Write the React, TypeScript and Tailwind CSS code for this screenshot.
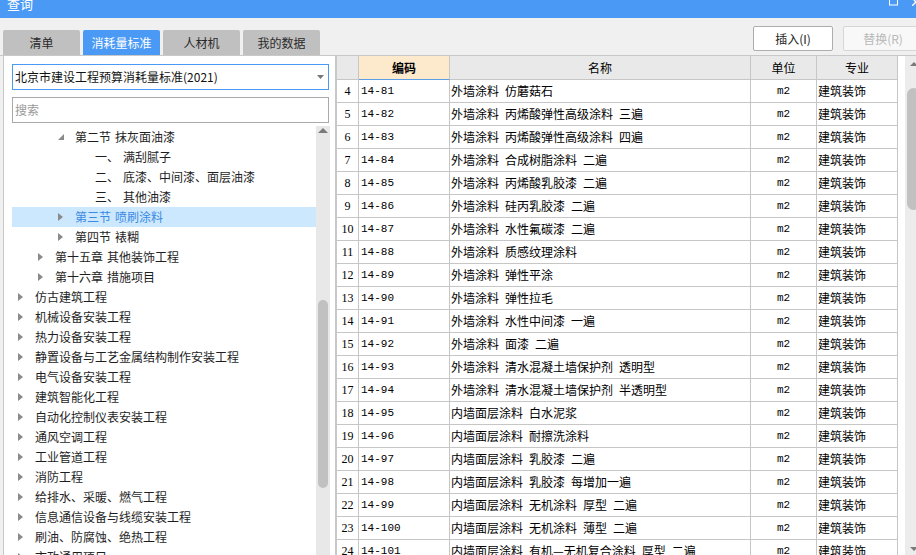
import React from 'react'

type TreeNode = {
  level: 1 | 2 | 3 | 4
  state: 'open' | 'closed' | 'leaf'
  label: string
  prefix?: string
  selected?: boolean
}

const TREE: TreeNode[] = [
  { level: 3, state: 'open', label: '第二节 抹灰面油漆' },
  { level: 4, state: 'leaf', prefix: '一、', label: '满刮腻子' },
  { level: 4, state: 'leaf', prefix: '二、', label: '底漆、中间漆、面层油漆' },
  { level: 4, state: 'leaf', prefix: '三、', label: '其他油漆' },
  { level: 3, state: 'closed', label: '第三节 喷刷涂料', selected: true },
  { level: 3, state: 'closed', label: '第四节 裱糊' },
  { level: 2, state: 'closed', label: '第十五章 其他装饰工程' },
  { level: 2, state: 'closed', label: '第十六章 措施项目' },
  { level: 1, state: 'closed', label: '仿古建筑工程' },
  { level: 1, state: 'closed', label: '机械设备安装工程' },
  { level: 1, state: 'closed', label: '热力设备安装工程' },
  { level: 1, state: 'closed', label: '静置设备与工艺金属结构制作安装工程' },
  { level: 1, state: 'closed', label: '电气设备安装工程' },
  { level: 1, state: 'closed', label: '建筑智能化工程' },
  { level: 1, state: 'closed', label: '自动化控制仪表安装工程' },
  { level: 1, state: 'closed', label: '通风空调工程' },
  { level: 1, state: 'closed', label: '工业管道工程' },
  { level: 1, state: 'closed', label: '消防工程' },
  { level: 1, state: 'closed', label: '给排水、采暖、燃气工程' },
  { level: 1, state: 'closed', label: '信息通信设备与线缆安装工程' },
  { level: 1, state: 'closed', label: '刷油、防腐蚀、绝热工程' },
  { level: 1, state: 'closed', label: '市政通用项目' },
]

const INDENT: Record<number, string> = {
  1: 'pl-[6px]',
  2: 'pl-[26px]',
  3: 'pl-[46px]',
  4: 'pl-[66px]',
}

const ROWS: [number, string, string][] = [
  [4, '14-81', '外墙涂料 仿蘑菇石'],
  [5, '14-82', '外墙涂料 丙烯酸弹性高级涂料 三遍'],
  [6, '14-83', '外墙涂料 丙烯酸弹性高级涂料 四遍'],
  [7, '14-84', '外墙涂料 合成树脂涂料 二遍'],
  [8, '14-85', '外墙涂料 丙烯酸乳胶漆 二遍'],
  [9, '14-86', '外墙涂料 硅丙乳胶漆 二遍'],
  [10, '14-87', '外墙涂料 水性氟碳漆 二遍'],
  [11, '14-88', '外墙涂料 质感纹理涂料'],
  [12, '14-89', '外墙涂料 弹性平涂'],
  [13, '14-90', '外墙涂料 弹性拉毛'],
  [14, '14-91', '外墙涂料 水性中间漆 一遍'],
  [15, '14-92', '外墙涂料 面漆 二遍'],
  [16, '14-93', '外墙涂料 清水混凝土墙保护剂 透明型'],
  [17, '14-94', '外墙涂料 清水混凝土墙保护剂 半透明型'],
  [18, '14-95', '内墙面层涂料 白水泥浆'],
  [19, '14-96', '内墙面层涂料 耐擦洗涂料'],
  [20, '14-97', '内墙面层涂料 乳胶漆 二遍'],
  [21, '14-98', '内墙面层涂料 乳胶漆 每增加一遍'],
  [22, '14-99', '内墙面层涂料 无机涂料 厚型 二遍'],
  [23, '14-100', '内墙面层涂料 无机涂料 薄型 二遍'],
  [24, '14-101', '内墙面层涂料 有机—无机复合涂料 厚型 二遍'],
]

const TABS = ['清单', '消耗量标准', '人材机', '我的数据']

// words separated by a fixed gap, since the CJK font's space is very narrow
function Spaced({ text, gap }: { text: string; gap: string }) {
  const parts = text.split(' ')
  return (
    <>
      {parts.map((p, i) => (
        <span key={i} className={i > 0 ? gap : ''}>
          {p}
        </span>
      ))}
    </>
  )
}

function Caret({ open }: { open: boolean }) {
  if (open) {
    return (
      <svg width="6" height="6" viewBox="0 0 6 6">
        <path d="M6 0V6H0Z" fill="#8a8a8a" />
      </svg>
    )
  }
  return (
    <svg width="5" height="8" viewBox="0 0 5 8">
      <path d="M0 0L5 4L0 8Z" fill="#8a8a8a" />
    </svg>
  )
}

function TreeRow({ node }: { node: TreeNode }) {
  return (
    <div
      className={`flex h-[20px] items-center whitespace-nowrap ${INDENT[node.level]} ${
        node.selected ? 'bg-[#cce8ff] text-[#3b89e3]' : 'text-[#1e1e1e]'
      }`}
    >
      <span className="flex w-[17px] shrink-0 items-center">
        {node.state !== 'leaf' && <Caret open={node.state === 'open'} />}
      </span>
      {node.prefix && <span className="mr-[4px]">{node.prefix}</span>}
      <Spaced text={node.label} gap="ml-[4px]" />
    </div>
  )
}

function TableRow({ row }: { row: [number, string, string] }) {
  const [no, code, name] = row
  return (
    <div className="flex h-[23px] shrink-0 border-b border-[#c6c6c6] text-black">
      <div className="flex w-[22px] shrink-0 items-center justify-center border-r border-[#c6c6c6] font-['Liberation_Serif',serif] text-[12px]">
        {no}
      </div>
      <div className="flex w-[91px] shrink-0 items-center border-r border-[#c6c6c6] pl-[2px] font-['Liberation_Mono',monospace] text-[11px]">
        {code}
      </div>
      <div className="flex w-[301px] shrink-0 items-center overflow-hidden whitespace-nowrap border-r border-[#c6c6c6] pl-[1px]">
        <Spaced text={name} gap="ml-[6px]" />
      </div>
      <div className="flex w-[66px] shrink-0 items-center justify-center border-r border-[#c6c6c6] font-['Liberation_Mono',monospace] text-[11px]">
        m2
      </div>
      <div className="flex w-[81px] shrink-0 items-center border-r border-[#c6c6c6] pl-[1px]">
        建筑装饰
      </div>
    </div>
  )
}

export default function App() {
  return (
    <div className="flex h-[555px] w-[916px] flex-col overflow-hidden bg-[#f0f0f0] font-['Noto_Sans_CJK_SC','Noto_Sans',sans-serif] text-[12px] leading-[14px]">
      {/* title bar */}
      <div className="flex h-[18px] shrink-0 items-start justify-between overflow-hidden bg-[#4a9af5] pl-[7px] text-white">
        <span className="-mt-[4px] text-[13px] leading-[15px]">查询</span>
        <div className="flex items-start gap-[14px]">
          <svg width="9" height="10" viewBox="0 0 9 10" className="-mt-[4px]">
            <rect x="0.5" y="0.5" width="8" height="8.5" fill="none" stroke="#fff" strokeWidth="1" />
            <rect x="0" y="0" width="9" height="2.5" fill="#fff" />
          </svg>
          <svg width="10" height="8" viewBox="0 0 10 8" className="-mr-[6px] -mt-[2px]">
            <path d="M0 0L8 8M8 0L0 8" stroke="#fff" strokeWidth="1.3" />
          </svg>
        </div>
      </div>

      {/* tabs + buttons */}
      <div className="flex h-[37px] shrink-0 items-end justify-between pl-[3px]">
        <div className="flex gap-[3px]">
          {TABS.map((t, i) => (
            <div
              key={t}
              className={`flex h-[25px] w-[77px] items-center justify-center rounded-t-[2px] text-[12px] ${
                i === 1 ? 'bg-[#4a9af5] text-white' : 'bg-[#c0c0c0] text-[#2a2a2a]'
              }`}
            >
              {t}
            </div>
          ))}
        </div>
        <div className="-mr-[7px] mb-[4px] flex gap-[10px]">
          <div className="flex h-[25px] w-[80px] items-center justify-center rounded-[2px] border border-[#adadad] bg-white text-[#222]">
            插入(I)
          </div>
          <div className="flex h-[25px] w-[80px] items-center justify-center rounded-[2px] border border-[#d6d6d6] bg-[#f8f8f8] text-[#b8b8b8]">
            替换(R)
          </div>
        </div>
      </div>

      {/* main area */}
      <div className="flex min-h-0 flex-1 border-t border-[#c8c8c8]">
        {/* left panel */}
        <div className="ml-[3px] flex w-[333px] shrink-0 flex-col border-x border-[#c8c8c8] bg-white">
          <div className="ml-[8px] mt-[8px] flex h-[26px] w-[317px] shrink-0 items-center justify-between border border-[#4a9af5] pl-[2px] pr-[4px] text-[#111]">
            <span>北京市建设工程预算消耗量标准(2021)</span>
            <svg width="7" height="4" viewBox="0 0 7 4">
              <path d="M0 0H7L3.5 4Z" fill="#777" />
            </svg>
          </div>
          <div className="ml-[8px] mt-[7px] flex h-[26px] w-[317px] shrink-0 items-center border border-[#a9a9a9] pl-[2px] text-[#9a9a9a]">
            搜索
          </div>
          <div className="ml-[8px] mt-[3px] flex min-h-0 w-[318px] flex-1">
            <div className="flex-1 overflow-hidden pt-[1px]">
              {TREE.map((n) => (
                <TreeRow key={n.label} node={n} />
              ))}
            </div>
            <div className="flex w-[14px] shrink-0 flex-col items-center bg-[#e8e8e8]">
              <svg width="10" height="5" viewBox="0 0 10 5" className="mt-[2px]">
                <path d="M0 5L5 0L10 5Z" fill="#7a7a7a" />
              </svg>
              <div className="mt-[167px] h-[188px] w-[10px] rounded-full bg-[#c1c1c1]" />
            </div>
          </div>
        </div>

        {/* right panel */}
        <div className="flex w-[586px] shrink-0 border-l border-[#c8c8c8] bg-white">
          <div className="flex w-[561px] shrink-0 flex-col overflow-hidden">
            <div className="flex h-[24px] shrink-0 bg-[#e9e9e9] text-black">
              <div className="w-[22px] shrink-0 border-b border-r border-[#c6c6c6]" />
              <div className="flex w-[91px] shrink-0 items-center justify-center border-b border-r border-b-[#5d9fe6] border-r-[#c6c6c6] bg-[#fde9cc] font-bold">
                编码
              </div>
              <div className="flex w-[301px] shrink-0 items-center justify-center border-b border-r border-[#c6c6c6]">
                名称
              </div>
              <div className="flex w-[66px] shrink-0 items-center justify-center border-b border-r border-[#c6c6c6]">
                单位
              </div>
              <div className="flex w-[81px] shrink-0 items-center justify-center border-b border-r border-[#c6c6c6]">
                专业
              </div>
            </div>
            {ROWS.map((r) => (
              <TableRow key={r[0]} row={r} />
            ))}
          </div>
          <div className="ml-[7px] flex w-[17px] shrink-0 flex-col items-center bg-[#ececec]">
            <svg width="8" height="4" viewBox="0 0 8 4" className="mt-[6px]">
              <path d="M0 4L4 0L8 4Z" fill="#7a7a7a" />
            </svg>
            <div className="mt-[22px] h-[122px] w-[13px] rounded-full bg-[#c1c1c1]" />
            <svg width="8" height="4" viewBox="0 0 8 4" className="mb-[4px] mt-auto">
              <path d="M0 0H8L4 4Z" fill="#7a7a7a" />
            </svg>
          </div>
        </div>
      </div>
    </div>
  )
}
